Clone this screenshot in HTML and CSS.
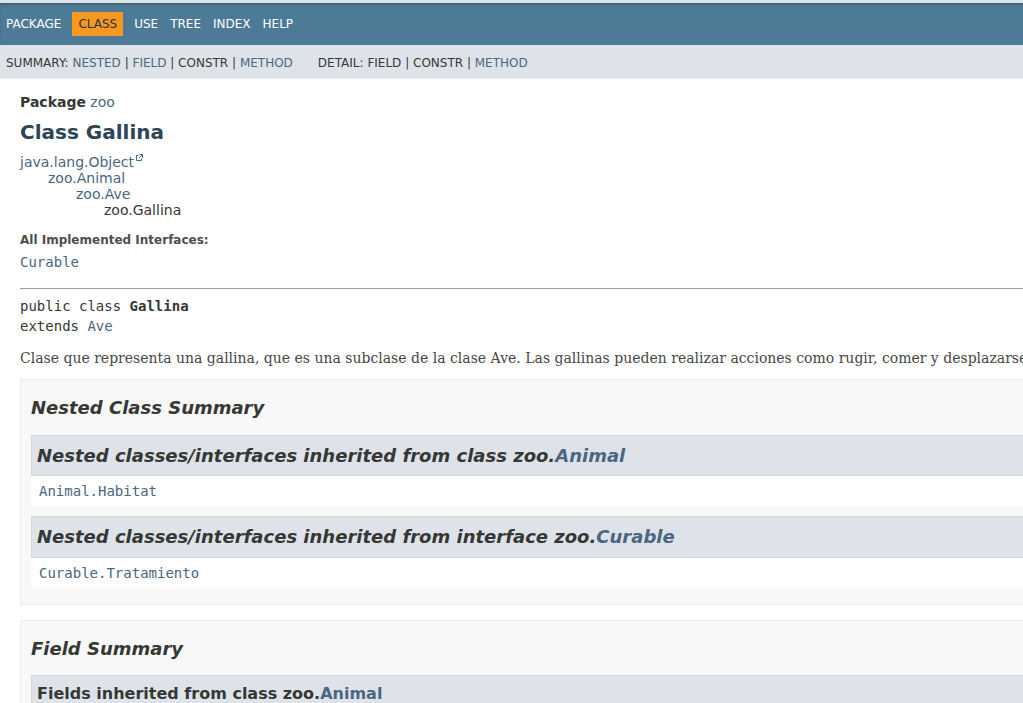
FILE: index.html
```html
<!DOCTYPE html>
<html lang="es">
<head>
<meta charset="utf-8">
<title>Gallina</title>
<link rel="stylesheet" href="styles.css">
</head>
<body class="class-declaration-page">
<div class="page">
<header class="header-area">
  <nav class="top-nav">
    <ul class="nav-list">
      <li><a href="#">Package</a></li>
      <li class="nav-bar-cell1-rev">Class</li>
      <li><a href="#">Use</a></li>
      <li><a href="#">Tree</a></li>
      <li><a href="#">Index</a></li>
      <li><a href="#">Help</a></li>
    </ul>
  </nav>
  <div class="sub-nav">
    <ul class="sub-nav-list">
      <li>Summary:&nbsp;</li>
      <li><a href="#">Nested</a>&nbsp;|&nbsp;</li>
      <li><a href="#">Field</a>&nbsp;|&nbsp;</li>
      <li>Constr&nbsp;|&nbsp;</li>
      <li><a href="#">Method</a></li>
    </ul>
    <ul class="sub-nav-list">
      <li>Detail:&nbsp;</li>
      <li>Field&nbsp;|&nbsp;</li>
      <li>Constr&nbsp;|&nbsp;</li>
      <li><a href="#">Method</a></li>
    </ul>
  </div>
</header>
<main>
  <div class="header">
    <div class="sub-title"><span class="package-label">Package</span>&nbsp;<a href="#">zoo</a></div>
    <h1 class="title">Class Gallina</h1>
  </div>
  <div class="inheritance"><a href="#">java.lang.Object</a><svg class="ext" width="8" height="8" viewBox="0 0 8 8"><path d="M3.5 1.5H1.5V6.5H6.5V4.5" fill="none" stroke="#4A6782" stroke-width="1"/><path d="M4.5 0.5H7.5V3.5M7.5 0.5L3.8 4.2" fill="none" stroke="#4A6782" stroke-width="1"/></svg>
    <div class="inheritance"><a href="#">zoo.Animal</a>
      <div class="inheritance"><a href="#">zoo.Ave</a>
        <div class="inheritance">zoo.Gallina</div>
      </div>
    </div>
  </div>
  <section class="class-description">
    <dl class="notes">
      <dt>All Implemented Interfaces:</dt>
      <dd><code><a href="#">Curable</a></code></dd>
    </dl>
    <hr>
    <div class="type-signature"><span>public class </span><span class="type-name">Gallina</span><br><span>extends <a href="#">Ave</a></span></div>
    <div class="block">Clase que representa una gallina, que es una subclase de la clase Ave. Las gallinas pueden realizar acciones como rugir, comer y desplazarse.</div>
  </section>
  <section class="summary">
    <ul class="summary-list">
      <li>
        <section class="box">
          <h2>Nested Class Summary</h2>
          <div class="inherited-list">
            <h2>Nested classes/interfaces inherited from class&nbsp;zoo.<a href="#">Animal</a></h2>
            <code><a href="#">Animal.Habitat</a></code>
          </div>
          <div class="inherited-list">
            <h2>Nested classes/interfaces inherited from interface&nbsp;zoo.<a href="#">Curable</a></h2>
            <code><a href="#">Curable.Tratamiento</a></code>
          </div>
        </section>
      </li>
      <li>
        <section class="box">
          <h2>Field Summary</h2>
          <div class="inherited-list">
            <h3>Fields inherited from class&nbsp;zoo.<a href="#">Animal</a></h3>
            <code><a href="#">edad</a>, <a href="#">nombre</a></code>
          </div>
        </section>
      </li>
    </ul>
  </section>
</main>
</div>
</body>
</html>
```

FILE: styles.css
```css
html {
  overflow: hidden;
}
body {
  margin: 0;
  padding: 0;
  background: #ffffff;
  color: #353833;
  font-family: "DejaVu Sans", Arial, sans-serif;
  font-size: 14px;
}
.page {
  width: 1200px;
}
a {
  color: #4A6782;
  text-decoration: none;
}
.header-area {
  border-top: 3px solid #dde3e6;
}
.top-nav {
  background: #4D7A97;
  color: #ffffff;
  font-size: 12px;
  padding-top: 9px;
  height: 33px;
  box-shadow: inset 0 2px 2px rgba(0, 0, 0, 0.18);
}
.nav-list {
  display: flex;
  margin: 0;
  padding: 0;
  list-style: none;
}
.nav-list li {
  padding: 5px 6px;
  text-transform: uppercase;
}
.nav-list a {
  color: #ffffff;
}
.nav-list .nav-bar-cell1-rev {
  background: #F8981D;
  color: #253441;
  margin: 0 5px;
}
.sub-nav {
  background: #dee3e9;
  font-size: 12px;
  border-bottom: 1px solid #e8ecef;
  display: flex;
  align-items: center;
  padding-left: 6px;
  padding-top: 2px;
  box-sizing: border-box;
  height: 34px;
}
.sub-nav-list {
  display: flex;
  list-style: none;
  margin: 0 25px 0 0;
  padding: 0;
  text-transform: uppercase;
}
main {
  padding: 10px 20px;
}
.sub-title {
  margin: 5px 0 0 0;
}
.package-label {
  font-weight: bold;
}
.title {
  color: #2c4557;
  font-size: 20px;
  margin: 10px 0;
}
.inheritance {
  line-height: 16px;
}
.inheritance .inheritance {
  margin-left: 28px;
}
.ext {
  vertical-align: 5px;
  margin-left: 1px;
}
.class-description {
  line-height: 1.4;
}
.notes {
  margin: 14px 0 0 0;
}
.notes dt {
  font-size: 12px;
  font-weight: bold;
  color: #4E4E4E;
}
.notes dd {
  margin: 3px 0 16px 0;
  line-height: 20px;
}
code, .type-signature {
  font-family: "DejaVu Sans Mono", monospace;
  font-size: 14px;
}
hr {
  border: none;
  border-top: 1px solid #9c9c9c;
  margin: 0 0 7px 0;
}
.type-signature {
  line-height: 20px;
}
.type-name {
  font-weight: bold;
}
.block {
  font-family: "DejaVu Serif", Georgia, serif;
  font-size: 14px;
  color: #474747;
  margin: 13px 0 11px 0;
  white-space: nowrap;
}
.summary-list {
  list-style: none;
  margin: 0;
  padding: 0;
}
.summary-list > li {
  margin-bottom: 15px;
  line-height: 1.4;
}
.box {
  padding: 0 20px 6px 10px;
  border: 1px solid #ededed;
  background: #f8f8f8;
}
.box > h2 {
  font-size: 18px;
  font-style: italic;
  margin: 15px 0 14px 0;
}
.inherited-list {
  background: #ffffff;
  padding: 0 0 5px 8px;
  margin: 10px 0;
}
.box > h2 + .inherited-list {
  margin-top: 0;
}
.inherited-list h2,
.inherited-list h3 {
  background: #dee3e9;
  border: 1px solid #d0d9e0;
  margin: 0 0 6px -8px;
  padding: 7px 5px;
}
.inherited-list h2 {
  font-size: 18px;
  font-style: italic;
}
.inherited-list h3 {
  font-size: 16px;
}
.inherited-list code {
  color: #4A6782;
}
```
